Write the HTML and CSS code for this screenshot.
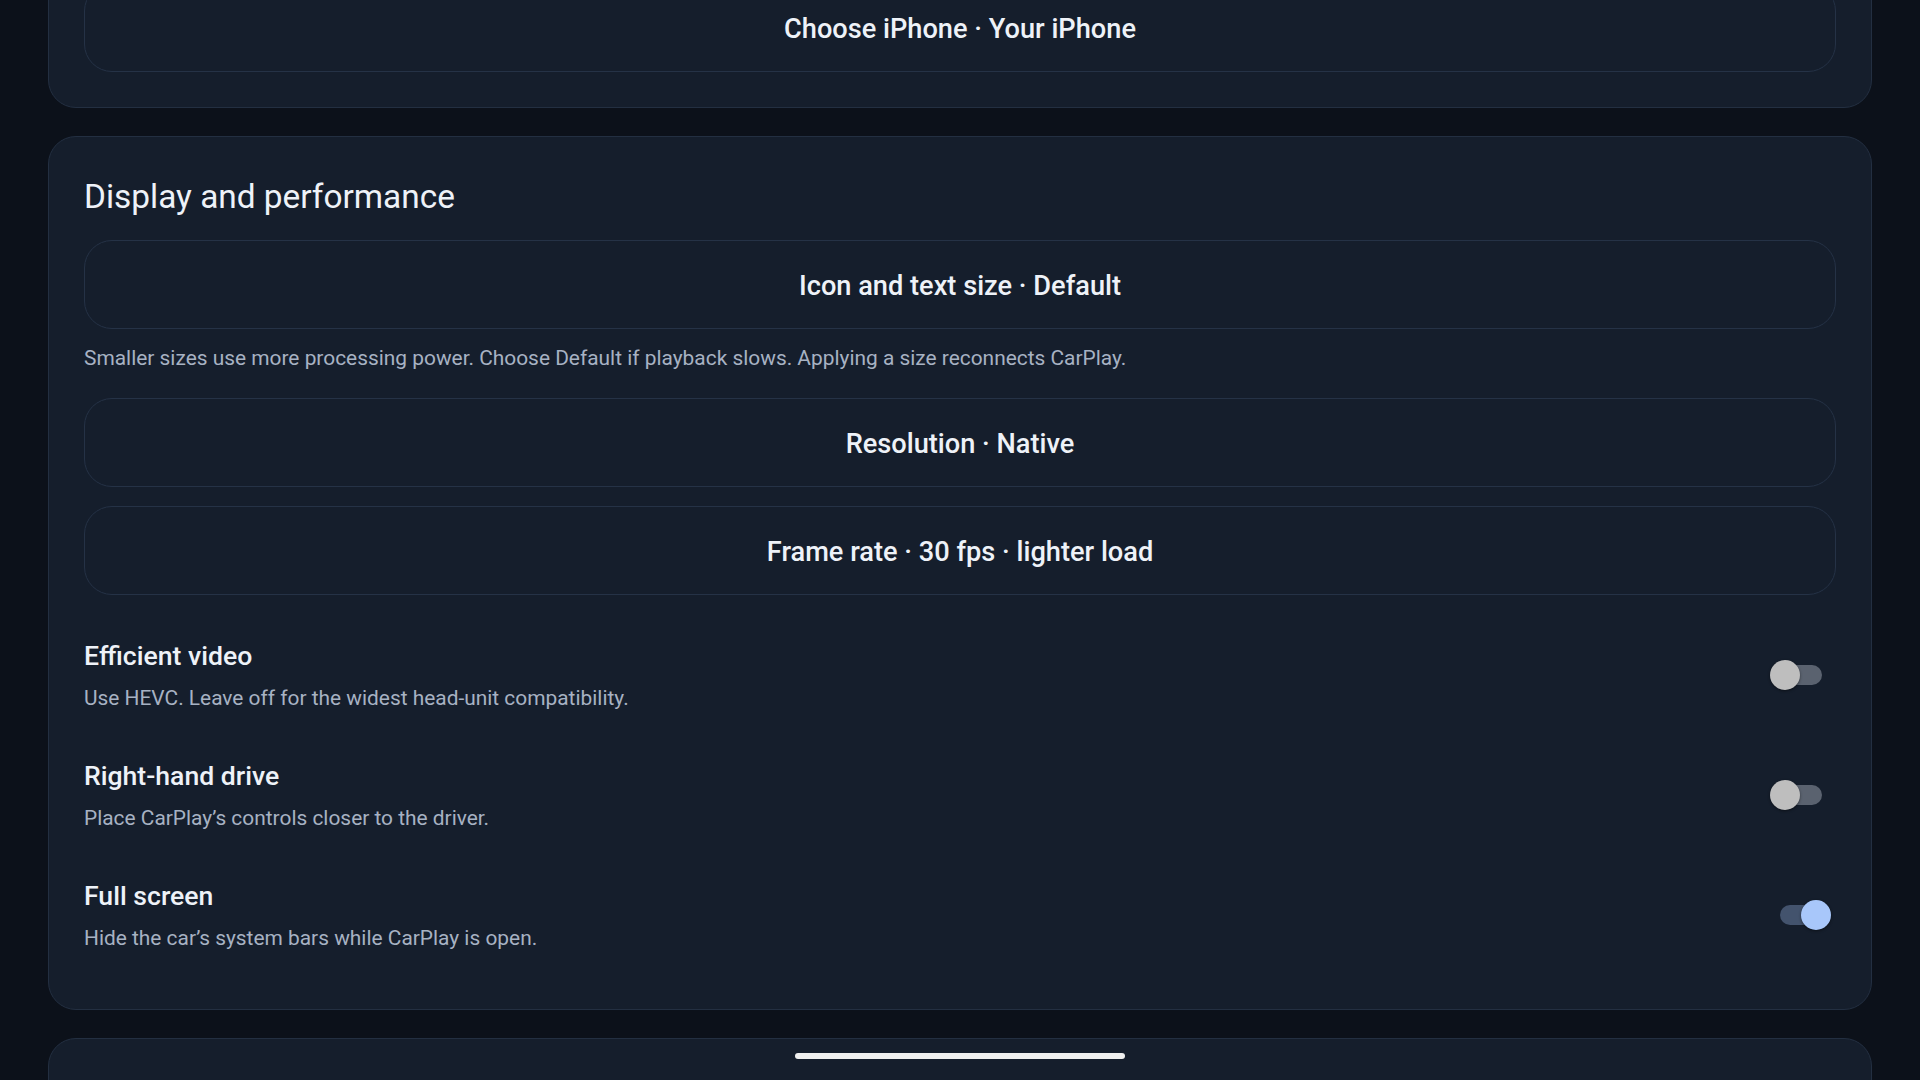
FILE: index.html
```html
<!DOCTYPE html>
<html lang="en">
<head>
<meta charset="utf-8">
<title>Settings</title>
<link rel="stylesheet" href="styles.css">
</head>
<body>
<div class="screen">
  <section class="card card-top">
    <button class="choice">Choose iPhone · Your iPhone</button>
  </section>

  <section class="card">
    <h2 class="card-title">Display and performance</h2>
    <button class="choice">Icon and text size · Default</button>
    <p class="helper">Smaller sizes use more processing power. Choose Default if playback slows. Applying a size reconnects CarPlay.</p>
    <button class="choice">Resolution · Native</button>
    <button class="choice choice-gap">Frame rate · 30 fps · lighter load</button>

    <div class="rows">
      <div class="row">
        <div class="row-text">
          <div class="row-title">Efficient video</div>
          <div class="row-desc">Use HEVC. Leave off for the widest head-unit compatibility.</div>
        </div>
        <span class="switch"><span class="track"></span><span class="thumb"></span></span>
      </div>
      <div class="row">
        <div class="row-text">
          <div class="row-title">Right-hand drive</div>
          <div class="row-desc">Place CarPlay’s controls closer to the driver.</div>
        </div>
        <span class="switch"><span class="track"></span><span class="thumb"></span></span>
      </div>
      <div class="row">
        <div class="row-text">
          <div class="row-title">Full screen</div>
          <div class="row-desc">Hide the car’s system bars while CarPlay is open.</div>
        </div>
        <span class="switch on"><span class="track"></span><span class="thumb"></span></span>
      </div>
    </div>
  </section>

  <section class="card card-next"></section>
</div>
<div class="home-indicator"></div>
</body>
</html>
```
FILE: styles.css
```css
* { box-sizing: border-box; }

html, body {
  margin: 0;
  height: 100%;
  overflow: hidden;
  background: #0c111a;
}

body {
  font-family: Roboto, "Noto Sans", "Liberation Sans", sans-serif;
  color: #eef2f8;
}

.screen {
  padding: 0 48px;
  margin-top: -53px;
  display: flex;
  flex-direction: column;
  gap: 28px;
}

.card {
  background: #151e2c;
  border: 1px solid #232f41;
  border-radius: 28px;
  padding: 35px;
  display: flex;
  flex-direction: column;
}

.card-title {
  margin: 0 0 20px;
  font-size: 33.4px;
  line-height: 48px;
  font-weight: 400;
  color: #eef2f8;
  padding-top: 1px;
  height: 48px;
}

.choice {
  display: flex;
  align-items: center;
  justify-content: center;
  width: 100%;
  height: 89px;
  background: #151e2c;
  border: 1px solid #253246;
  border-radius: 28px;
  font-family: inherit;
  font-size: 27.2px;
  font-weight: 500;
  color: #eef2f8;
  padding: 2px 24px 0;
}

.choice-gap { margin-top: 19px; }

.helper {
  margin: 15px 0 26px 0;
  font-size: 20.9px;
  line-height: 28px;
  color: #a7b2c3;
}

.rows {
  margin-top: 19px;
  display: flex;
  flex-direction: column;
}

.row {
  display: flex;
  align-items: center;
  justify-content: space-between;
  padding: 25px 4px 22px 0;
}

.row-text {
  display: flex;
  flex-direction: column;
  gap: 11px;
}

.row-title {
  font-size: 26.6px;
  line-height: 34px;
  font-weight: 500;
  color: #eef2f8;
}

.row-desc {
  font-size: 20.9px;
  line-height: 28px;
  color: #a7b2c3;
}

.switch {
  position: relative;
  width: 62px;
  height: 30px;
  flex: none;
  margin-top: -1px;
}

.track {
  position: absolute;
  left: 10px;
  right: 10px;
  top: 5px;
  height: 20px;
  border-radius: 10px;
  background: #5a626f;
}

.thumb {
  position: absolute;
  left: 0;
  top: 0;
  width: 30px;
  height: 30px;
  border-radius: 50%;
  background: #bebebe;
  box-shadow: 0 1px 3px rgba(0, 0, 0, 0.45);
}

.switch.on .track { background: #43536d; }
.switch.on .thumb {
  left: 31px;
  background: #a8c7fa;
}

.card-next {
  height: 240px;
}

.home-indicator {
  position: fixed;
  left: 50%;
  bottom: 21px;
  width: 330px;
  height: 6px;
  margin-left: -165px;
  border-radius: 3px;
  background: #f0f0f0;
}
```
